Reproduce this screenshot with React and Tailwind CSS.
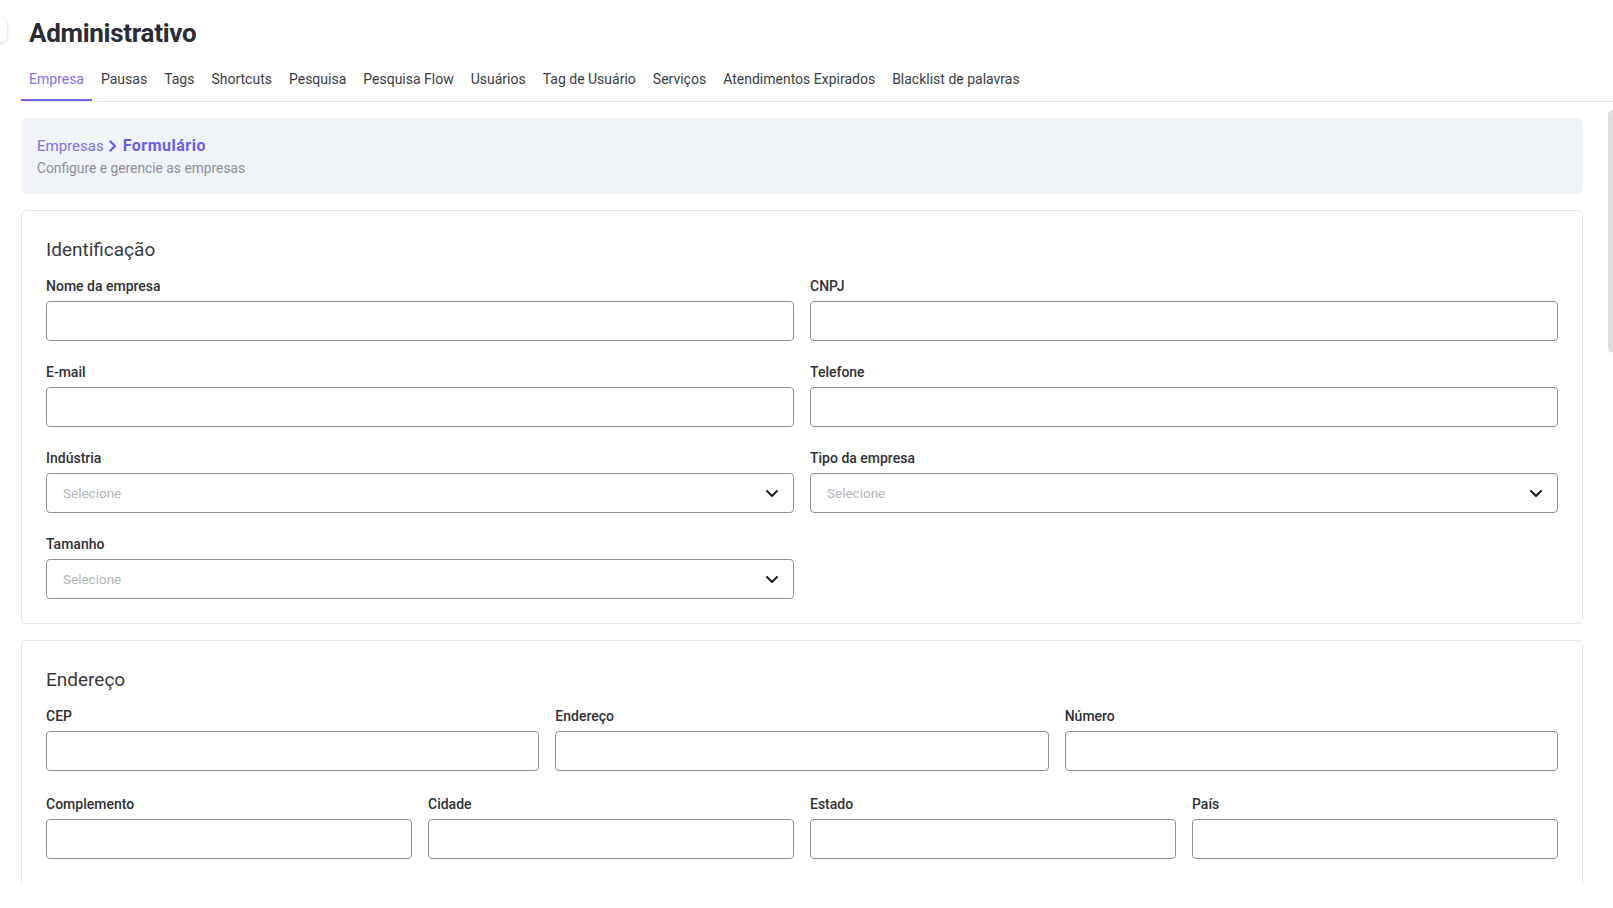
import React from "react";

const tabs = [
  "Empresa",
  "Pausas",
  "Tags",
  "Shortcuts",
  "Pesquisa",
  "Pesquisa Flow",
  "Usuários",
  "Tag de Usuário",
  "Serviços",
  "Atendimentos Expirados",
  "Blacklist de palavras",
];

function Chevron() {
  return (
    <svg width="12" height="7" viewBox="0 0 12 7" fill="none" className="shrink-0">
      <path d="M1 1l5 5 5-5" stroke="#1a1a1a" strokeWidth="1.9" strokeLinecap="round" strokeLinejoin="round" />
    </svg>
  );
}

function Field({ label }) {
  return (
    <div>
      <label className="mb-[5px] block text-sm leading-5 font-medium text-[#303036]">{label}</label>
      <input className="block h-10 w-full rounded-[4px] border border-[#8f8f9c] bg-white px-4 text-[13px] outline-none" />
    </div>
  );
}

function SelectField({ label }) {
  return (
    <div>
      <label className="mb-[5px] block text-sm leading-5 font-medium text-[#303036]">{label}</label>
      <div className="flex h-10 w-full items-center justify-between rounded-[4px] border border-[#8f8f9c] bg-white pl-4 pr-[15px]">
        <span className="text-[13.5px] leading-[18px] text-[#b3b3bb]">Selecione</span>
        <Chevron />
      </div>
    </div>
  );
}

export default function App() {
  return (
    <div className="relative flex h-[908px] flex-col overflow-hidden bg-white font-['Roboto',sans-serif]">
      {/* toggle peeking from the left */}
      <div className="absolute left-[-24px] top-[18px] h-[24px] w-[31px] rounded-md bg-white shadow-[0_1px_4px_rgba(0,0,0,0.18)]" />
      {/* scrollbar thumb */}
      <div className="absolute right-0 top-[110px] h-[243px] w-[5px] rounded-l-full bg-[#dedede]" />

      <header className="pl-[29px] pt-[17px]">
        <h1 className="text-[26px] leading-8 font-bold tracking-[-0.3px] text-[#2a2b35]">Administrativo</h1>
      </header>

      <nav className="ml-[21px] flex gap-px border-b border-[#e5e7eb]">
        {tabs.map((t, i) => (
          <a
            key={t}
            className={
              i === 0
                ? "border-b-2 border-[#6f66e3] px-2 pt-5 pb-[10px] text-sm leading-5 text-[#7d72ee]"
                : "border-b-2 border-transparent px-2 pt-5 pb-[10px] text-sm leading-5 text-[#3c3c44]"
            }
          >
            {t}
          </a>
        ))}
      </nav>

      <main className="h-[782px] overflow-hidden pl-[21px] pr-[30px] pt-4">
        <div className="rounded-md bg-[#f0f3f8] px-4 pt-4 pb-[17px]">
          <div className="flex items-center leading-6">
            <span className="text-[15px] text-[#7d72ee]">Empresas</span>
            <svg width="8" height="12" viewBox="0 0 8 12" fill="none" className="ml-[5px] mr-[6px]">
              <path d="M1.5 1.5l4.5 4.5-4.5 4.5" stroke="#6b5de6" strokeWidth="2.4" strokeLinecap="round" strokeLinejoin="round" />
            </svg>
            <span className="text-base font-bold tracking-[0.5px] text-[#6b5de6]">Formulário</span>
          </div>
          <p className="mt-px text-[13.8px] leading-[18px] text-[#8c8f97]">Configure e gerencie as empresas</p>
        </div>

        <section className="mt-4 rounded-[5px] border border-[#e3e7ee] p-6">
          <h2 className="mb-3 text-[19px] leading-[29px] text-[#3a3a3e]">Identificação</h2>
          <div className="grid grid-cols-2 gap-x-4 gap-y-[21px]">
            <Field label="Nome da empresa" />
            <Field label="CNPJ" />
            <Field label="E-mail" />
            <Field label="Telefone" />
            <SelectField label="Indústria" />
            <SelectField label="Tipo da empresa" />
            <SelectField label="Tamanho" />
          </div>
        </section>

        <section className="mt-4 rounded-[5px] border border-[#e3e7ee] px-6 pt-6 pb-8">
          <h2 className="mb-3 text-[19px] leading-[29px] text-[#3a3a3e]">Endereço</h2>
          <div className="grid grid-cols-3 gap-x-4">
            <Field label="CEP" />
            <Field label="Endereço" />
            <Field label="Número" />
          </div>
          <div className="mt-[23px] grid grid-cols-4 gap-x-4">
            <Field label="Complemento" />
            <Field label="Cidade" />
            <Field label="Estado" />
            <Field label="País" />
          </div>
        </section>
      </main>
    </div>
  );
}
